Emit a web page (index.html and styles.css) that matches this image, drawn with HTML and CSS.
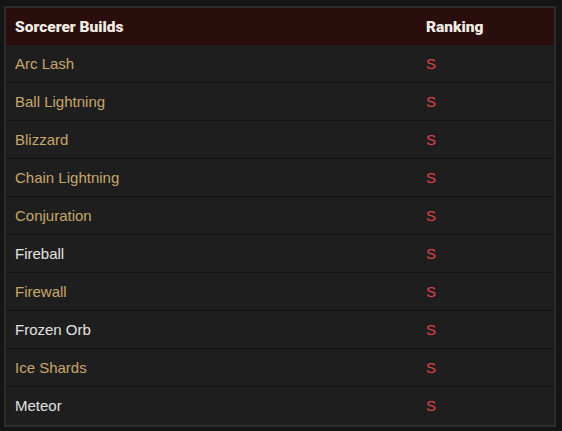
FILE: index.html
```html
<!DOCTYPE html>
<html>
<head>
<meta charset="utf-8">
<link rel="stylesheet" href="styles.css">
</head>
<body>
<div class="wrap">
  <table class="builds">
    <thead>
      <tr><th class="c1">Sorcerer Builds</th><th class="c2">Ranking</th></tr>
    </thead>
    <tbody>
      <tr><td class="gold">Arc Lash</td><td class="rank">S</td></tr>
      <tr><td class="gold">Ball Lightning</td><td class="rank">S</td></tr>
      <tr><td class="gold">Blizzard</td><td class="rank">S</td></tr>
      <tr><td class="gold">Chain Lightning</td><td class="rank">S</td></tr>
      <tr><td class="gold">Conjuration</td><td class="rank">S</td></tr>
      <tr><td class="white">Fireball</td><td class="rank">S</td></tr>
      <tr><td class="gold">Firewall</td><td class="rank">S</td></tr>
      <tr><td class="white">Frozen Orb</td><td class="rank">S</td></tr>
      <tr><td class="gold">Ice Shards</td><td class="rank">S</td></tr>
      <tr><td class="white">Meteor</td><td class="rank">S</td></tr>
    </tbody>
  </table>
</div>
</body>
</html>
```
FILE: styles.css
```css
html, body { margin: 0; padding: 0; background: #151515; }
body { padding: 6px 0 0 4px; font-family: "Liberation Sans", Arial, sans-serif; }
.wrap {
  width: 548px;
  border: 2px solid #2c2c2c;
  background: #1f1e1f;
}
.builds { width: 100%; border-collapse: collapse; table-layout: fixed; }
.builds th {
  height: 37px; padding: 0 0 0 9px; text-align: left;
  background: #2a0e0e; color: #f3ece4; font-family: Roboto, "Liberation Sans", sans-serif;
  font-weight: 900; font-size: 15.5px;
}
.builds .c1 { width: 402px; }
.builds td {
  box-sizing: border-box;
  height: 38px; padding: 1px 0 0 9px; font-size: 15px; line-height: 18px;
  border-top: 1px solid #121212;
}
.builds tbody tr:first-child td { border-top: none; height: 37.5px; }
.gold { color: #c7a76b; }
.white { color: #e2e2e2; }
.rank { color: #e0404a; }
```
